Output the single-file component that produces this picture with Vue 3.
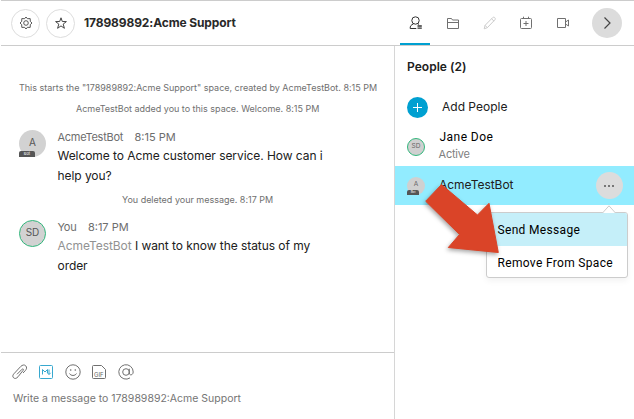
<script setup>
const space = '178989892:Acme Support'
</script>

<template>
  <div class="app">
    <header class="topbar">
      <button class="round"><svg width="14" height="14" viewBox="0 0 14 14"><circle cx="7" cy="7" r="2.300" /><path d="M7 1l1.400 1.700 2.800-.1.100 2.800L13 7l-1.700 1.600-.1 2.800-2.800-.1L7 13l-1.400-1.700-2.800.1-.1-2.800L1 7l1.700-1.600.1-2.800 2.800.1z" /></svg></button>
      <button class="round star"><svg width="14" height="14" viewBox="0 0 14 14"><path d="M7 1.800l1.300 3.700 4.100.1-3.200 2.500 1.200 4.200L7 9.900l-3.400 2.400 1.200-4.200-3.200-2.500 4.100-.1z" /></svg></button>
      <h1>{{ space }}</h1>
      <nav>
        <span class="tab active"><svg class="person" width="16" height="16" viewBox="0 0 16 16"><path d="M8.300 13.500H2.200c-.3-2.300 1-3.800 3.200-4.500M7.500 1.800a3.700 3.700 0 0 1 0 7.400A3.700 3.700 0 0 1 7.500 1.800zM9.500 8.700l1.500.6" /><path class="bars" d="M9.500 11h4.300M9.500 13.200h4.300" /></svg></span>
        <span class="tab"><svg width="14" height="14" viewBox="0 0 14 14"><path d="M1.500 12.500v-10h4l1 1.500h6v8.500zM1.500 6.500h11" /></svg></span>
        <span class="tab pale"><svg width="14" height="14" viewBox="0 0 14 14"><path d="M1.200 12.800l.9-3.500 7.500-7.600c.7-.7 1.600-.6 2.200 0s.7 1.500 0 2.200l-7.500 7.800zM8.600 2.800l2.500 2.400M2.100 9.300l2.200 2.400" /></svg></span>
        <span class="tab"><svg width="14" height="14" viewBox="0 0 14 14"><path d="M2.500 2.500h9a1 1 0 0 1 1 1v8a1 1 0 0 1-1 1h-9a1 1 0 0 1-1-1v-8a1 1 0 0 1 1-1zM4.500.700v1.800M9.500.700v1.800M7 5v5M4.500 7.500h5" /></svg></span>
        <span class="tab"><svg width="14" height="14" viewBox="0 0 14 14"><path d="M1.500 2.500h8v9h-8zM9.500 6l3-2v6l-3-2" /></svg></span>
        <button class="next"><svg width="16" height="16" viewBox="0 0 16 16"><path d="M5.500 2.500L11 8l-5.500 5.500" /></svg></button>
      </nav>
    </header>
    <div class="body">
      <main>
        <section class="feed">
          <p class="notice n1">This starts the "{{ space }}" space, created by AcmeTestBot. 8:15 PM</p>
          <p class="notice n2">AcmeTestBot added you to this space. Welcome. 8:15 PM</p>
          <article class="message">
            <div class="avatar">A<span class="bot">Bot</span></div>
            <div class="content">
              <div class="meta"><span class="author">AcmeTestBot</span><time>8:15 PM</time></div>
              <p class="welcome">Welcome to Acme customer service. How can i<br>help you?</p>
            </div>
          </article>
          <p class="notice n3">You deleted your message. 8:17 PM</p>
          <article class="message second">
            <div class="avatar user">SD</div>
            <div class="content">
              <div class="meta"><span class="author">You</span><time>8:17 PM</time></div>
              <p><span class="mention">AcmeTestBot</span> I want to know the status of my<br>order</p>
            </div>
          </article>
        </section>
        <footer>
          <div class="tools">
            <svg width="16" height="16" viewBox="0 0 16 16"><path d="M5 10.300l5.100-5.100c.8-.8 1.900.2 1.100 1.100L6 12.800c-1.400 1.700-3.100 2.200-4.400 1-1.300-1.200-.9-2.700.3-4l6.800-7.300c1.700-1.700 3.700-2 5-.7 1.400 1.400 1 3.300-.4 4.800L11 9" /></svg>
            <svg class="markdown" width="16" height="16" viewBox="0 0 16 16"><rect x="1.500" y="1.500" width="13" height="13" rx="1" /><path d="M4.500 10.500V5.500L7 8l2.500-2.500V9M11 5.500v5M9.300 8.800l1.700 1.700 1.700-1.700" /></svg>
            <svg width="16" height="16" viewBox="0 0 16 16"><circle cx="8" cy="8" r="7.200" /><path d="M4.500 9.500c1.400 2.600 5.600 2.600 7 0" /><circle class="dot" cx="5.700" cy="6" r=".8" /><circle class="dot" cx="10.300" cy="6" r=".8" /></svg>
            <svg width="16" height="16" viewBox="0 0 16 16"><path d="M2.500 1.500h8l4 4v8a1 1 0 0 1-1 1h-11a1 1 0 0 1-1-1v-11a1 1 0 0 1 1-1z" /><text x="3" y="12.800">GIF</text></svg>
            <svg width="16" height="16" viewBox="0 0 16 16"><circle cx="8" cy="8" r="3.300" /><path d="M11.300 4.700V9c0 3 3.900 2.200 3.900-1A7.200 7.200 0 1 0 12 13.900" /></svg>
          </div>
          <div class="placeholder">Write a message to {{ space }}</div>
        </footer>
      </main>
      <aside>
        <h2>People (2)</h2>
        <div class="add"><span class="plus"><svg width="21" height="21" viewBox="0 0 21 21"><path d="M10.500 6v9M6 10.500h9" /></svg></span><span>Add People</span></div>
        <div class="person-row"><span class="mini user">SD</span><div><div class="name">Jane Doe</div><div class="status">Active</div></div></div>
        <div class="person-row selected">
          <span class="mini">A<span class="bot">Bot</span></span><span class="botname">AcmeTestBot</span>
          <button class="more"><i></i><i></i><i></i></button>
          <div class="menu">
            <svg class="caret" width="14" height="8" viewBox="0 0 14 8"><path d="M.5 8L7 .8 13.500 8" /></svg>
            <div class="item hot">Send Message</div>
            <div class="item">Remove From Space</div>
          </div>
        </div>
      </aside>
    </div>
    <svg class="arrow" width="90" height="84" viewBox="0 0 90 84"><path d="M26.500 4.500L62.500 35 74 23.300 83.300 72.500 33.300 67.500 44.500 54.500 10.700 21.200z" /></svg>
  </div>
</template>

<style>
body { background: #fff; overflow: hidden; }
</style>
<style scoped>
* { box-sizing: border-box; }
.app { position: relative; width: 634px; height: 419px; padding-left: 1px; display: flex; flex-direction: column; font-family: Inter, "Liberation Sans", sans-serif; font-size: 12px; color: #202020; background: #fff; overflow: hidden; }
h1, h2, p { margin: 0; white-space: nowrap; }
button { padding: 0; border: 0; font: inherit; display: flex; align-items: center; justify-content: center; }
svg { fill: none; stroke: #707070; stroke-width: 1; display: block; flex: none; }
.topbar { height: 46px; flex: none; border-top: 1px solid #ccc; border-bottom: 1px solid #ccc; display: flex; align-items: center; padding-left: 10px; }
.round { width: 29px; height: 29px; border: 1px solid #ddd; border-radius: 50%; background: #fff; }
.round svg { stroke: #444; stroke-width: .9; }
.round.star svg { stroke-width: 1; }
.star { margin-left: 6px; }
h1 { font-size: 12px; font-weight: 700; line-height: 16px; margin: -1px 0 0 9px; width: 152px; letter-spacing: -.12px; color: #292929; }
nav { display: flex; align-items: center; height: 44px; margin-left: 164px; }
.tab { width: 30px; height: 44px; margin-right: 6.800px; display: flex; align-items: center; justify-content: center; padding-left: 2px; }
.active { border-bottom: 2px solid #00a0d1; padding: 2px 0 0 2px; }
.person { stroke: #333; }
.bars { stroke-width: 1.300; }
.pale svg { stroke: #ccc; }
.next { width: 30px; height: 30px; border-radius: 50%; background: #dcdcdc; margin-left: 8px; }
.next svg { stroke: #444; stroke-width: 1.200; }
.body { display: flex; flex: 1; min-height: 0; }
main { width: 394px; border-right: 1px solid #d6d6d6; display: flex; flex-direction: column; }
.feed { height: 306px; padding-top: 36px; }
.notice { color: #707070; font-size: 9px; line-height: 12px; padding-left: 18px; letter-spacing: -.01px; }
.n2 { padding-left: 75px; margin-top: 9px; }
.message { display: flex; padding-left: 18px; margin-top: 14px; height: 57px; }
.avatar { width: 27px; height: 27px; border-radius: 50%; background: #d2d2d2; color: #555; font-size: 10px; line-height: 25px; text-align: center; position: relative; margin-top: 1px; }
.user { border: 1px solid #32b77c; }
.avatar.user { line-height: 23px; }
.bot { position: absolute; left: 0; bottom: 0; width: 16px; height: 6px; border-radius: 2px 2px 0 0; background: #555; color: #fff; font-size: 4px; line-height: 6px; text-align: center; }
.content { margin-left: 12px; }
.meta { display: flex; gap: 11.500px; height: 16px; line-height: 16px; color: #6d6d6d; font-size: 11px; margin-left: -.5px; }
.author { letter-spacing: -.27px; }
.content p { font-size: 12px; line-height: 20px; margin: 1px 0 0 -.5px; letter-spacing: -.06px; }
.mention { color: #929292; }
.n3 { padding-left: 121px; margin-top: 8px; }
.second { margin-top: 13px; }
footer { border-top: 1px solid #ccc; flex: 1; padding: 11px 0 0 11px; }
.tools { display: flex; gap: 10.400px; }
.tools .markdown { stroke: #38a8cf; }
.tools text { font-size: 6px; fill: #666; stroke: none; }
.dot { fill: #666; stroke: none; }
.placeholder { color: #757575; font-size: 10.500px; line-height: 16px; margin: 11px 0 0 1px; white-space: nowrap; }
aside { flex: 1; min-width: 0; }
h2 { font-size: 12px; line-height: 16px; font-weight: 600; padding: 13px 0 0 12px; letter-spacing: .03px; }
.add { display: flex; align-items: center; height: 21px; margin: 22px 0 0 12px; gap: 14px; }
.add > span:last-child { margin-top: -3px; }
.plus { width: 21px; height: 21px; border-radius: 50%; background: #00a0d1; }
.plus svg { stroke: #fff; }
.person-row { display: flex; align-items: center; height: 48px; padding-left: 12px; position: relative; }
.mini { width: 18px; height: 18px; border-radius: 50%; background: #d0d0d0; font-size: 6.500px; line-height: 15px; text-align: center; position: relative; margin-right: 14px; color: #666; flex: none; }
.mini.user { margin-top: 9px; }
.mini .bot { width: 12px; height: 5px; line-height: 5px; font-size: 3px; }
.name { font-family: Roboto, sans-serif; letter-spacing: .45px; color: #000; line-height: 17px; margin: 7px 0 0 .5px; }
.status { color: #808080; font-size: 11px; letter-spacing: -.2px; line-height: 16px; margin: 0 0 0 -.5px; }
.selected { height: 39px; background: #92ecff; }
.botname { margin-top: -2px; letter-spacing: -.02px; }
.more { width: 27px; height: 27px; border-radius: 50%; background: #dcdcdc; gap: 2px; margin-left: auto; margin-right: 11.500px; }
.more i { width: 2px; height: 2px; border-radius: 50%; background: #555; }
.menu { position: absolute; top: 46px; right: 6px; width: 142px; height: 66px; border: 1px solid #ccc; border-radius: 3px; background: #fff; font-family: Roboto, sans-serif; box-shadow: 0 3px 6px rgb(0 0 0 / 5%); }
.caret { position: absolute; right: 11px; top: -8px; stroke: #ccc; fill: #fff; }
.item { height: 32px; line-height: 34px; padding-left: 10.500px; color: #000; white-space: nowrap; letter-spacing: .33px; }
.hot { background: #c5eff9; height: 33px; line-height: 34px; border-radius: 2px 2px 0 0; }
.arrow { position: absolute; left: 415px; top: 180px; filter: drop-shadow(-1px 2px 2px rgb(0 0 0 / 35%)); }
.arrow path { fill: #da4428; stroke: #da4428; stroke-width: 1; stroke-linejoin: round; }
</style>
